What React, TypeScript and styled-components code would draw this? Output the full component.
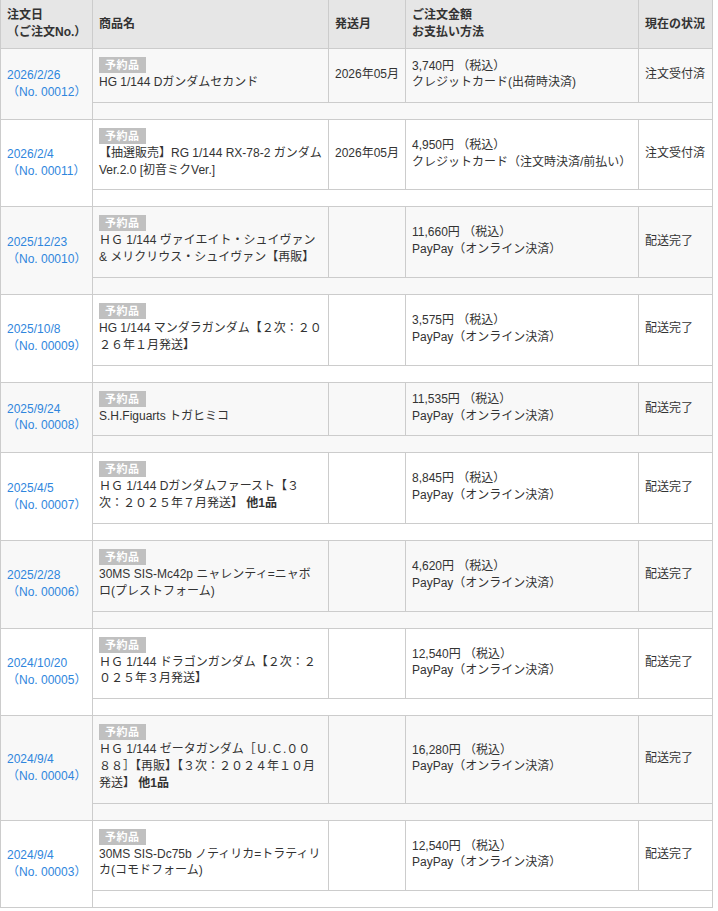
import { createGlobalStyle, styled } from "styled-components";

const GlobalStyle = createGlobalStyle`
  html, body {
    margin: 0;
    padding: 0;
    background: #ffffff;
  }
  body {
    font-family: "Liberation Sans", Arial, "Noto Sans CJK JP", sans-serif;
    font-size: 12px;
    color: #333333;
  }
`;

const Table = styled.table`
  width: 712px;
  border-collapse: collapse;
  table-layout: fixed;
  line-height: 1.4;
`;

const HeadCell = styled.th`
  background: #e6e6e6;
  border: 1px solid #cccccc;
  border-top: none;
  color: #333333;
  font-weight: bold;
  text-align: left;
  vertical-align: middle;
  padding: 6px 6px;
  height: 36px;
  white-space: nowrap;
`;

const Row = styled.tr<{ $alt: boolean }>`
  background: ${(p) => (p.$alt ? "#f8f8f8" : "#ffffff")};
`;

const Cell = styled.td<{ $nowrap?: boolean }>`
  border: 1px solid #cccccc;
  vertical-align: middle;
  padding: 8px 6px 10px;
  white-space: ${(p) => (p.$nowrap ? "nowrap" : "normal")};
`;

const DateCell = styled(Cell)`
  padding: 6px 6px;
  white-space: nowrap;
`;

const ProductCell = styled(Cell)`
  padding: 8px 6px 11px;
`;

const SpacerCell = styled.td`
  border: 1px solid #cccccc;
  height: 16px;
  padding: 0;
`;

const DateLink = styled.a`
  color: #2f86dd;
  text-decoration: none;
  display: block;
`;

const Badge = styled.span`
  display: inline-block;
  background: #c0c0c0;
  color: #ffffff;
  font-size: 11px;
  font-weight: bold;
  line-height: 16px;
  height: 16px;
  padding: 0 6px;
  margin-bottom: 1px;
  letter-spacing: 0.5px;
`;

const ProductName = styled.div`
  word-break: break-all;
`;

const Extra = styled.b`
  font-weight: bold;
`;

type Order = {
  date: string;
  no: string;
  name: string;
  extra?: string;
  ship: string;
  price: string;
  pay: string;
  status: string;
};

const orders: Order[] = [
  { date: "2026/2/26", no: "00012", name: "HG 1/144 Dガンダムセカンド", ship: "2026年05月", price: "3,740円", pay: "クレジットカード(出荷時決済)", status: "注文受付済" },
  { date: "2026/2/4", no: "00011", name: "【抽選販売】RG 1/144 RX-78-2 ガンダム Ver.2.0 [初音ミクVer.]", ship: "2026年05月", price: "4,950円", pay: "クレジットカード（注文時決済/前払い）", status: "注文受付済" },
  { date: "2025/12/23", no: "00010", name: "ＨＧ 1/144 ヴァイエイト・シュイヴァン & メリクリウス・シュイヴァン【再販】", ship: "", price: "11,660円", pay: "PayPay（オンライン決済）", status: "配送完了" },
  { date: "2025/10/8", no: "00009", name: "HG 1/144 マンダラガンダム【２次：２０２６年１月発送】", ship: "", price: "3,575円", pay: "PayPay（オンライン決済）", status: "配送完了" },
  { date: "2025/9/24", no: "00008", name: "S.H.Figuarts トガヒミコ", ship: "", price: "11,535円", pay: "PayPay（オンライン決済）", status: "配送完了" },
  { date: "2025/4/5", no: "00007", name: "ＨＧ 1/144 Dガンダムファースト【３次：２０２５年７月発送】", extra: "他1品", ship: "", price: "8,845円", pay: "PayPay（オンライン決済）", status: "配送完了" },
  { date: "2025/2/28", no: "00006", name: "30MS SIS-Mc42p ニャレンティ=ニャボロ(プレストフォーム)", ship: "", price: "4,620円", pay: "PayPay（オンライン決済）", status: "配送完了" },
  { date: "2024/10/20", no: "00005", name: "ＨＧ 1/144 ドラゴンガンダム【２次：２０２５年３月発送】", ship: "", price: "12,540円", pay: "PayPay（オンライン決済）", status: "配送完了" },
  { date: "2024/9/4", no: "00004", name: "ＨＧ 1/144 ゼータガンダム［Ｕ.Ｃ.００８８］【再販】【３次：２０２４年１０月発送】", extra: "他1品", ship: "", price: "16,280円", pay: "PayPay（オンライン決済）", status: "配送完了" },
  { date: "2024/9/4", no: "00003", name: "30MS SIS-Dc75b ノティリカ=トラティリカ(コモドフォーム)", ship: "", price: "12,540円", pay: "PayPay（オンライン決済）", status: "配送完了" },
];

export default function App() {
  return (
    <>
      <GlobalStyle />
      <Table>
        <colgroup>
          <col style={{ width: 92 }} />
          <col style={{ width: 236 }} />
          <col style={{ width: 77 }} />
          <col style={{ width: 233 }} />
          <col style={{ width: 74 }} />
        </colgroup>
        <thead>
          <tr>
            <HeadCell>
              注文日
              <br />
              （ご注文No.）
            </HeadCell>
            <HeadCell>商品名</HeadCell>
            <HeadCell>発送月</HeadCell>
            <HeadCell>
              ご注文金額
              <br />
              お支払い方法
            </HeadCell>
            <HeadCell>現在の状況</HeadCell>
          </tr>
        </thead>
        <tbody>
          {orders.map((o, i) => {
            const alt = i % 2 === 0;
            return [
              <Row key={o.no + "a"} $alt={alt}>
                <DateCell rowSpan={2}>
                  <DateLink href="#">{o.date}</DateLink>
                  <DateLink href="#">（No. {o.no}）</DateLink>
                </DateCell>
                <ProductCell>
                  <Badge>予約品</Badge>
                  <ProductName>
                    {o.name}
                    {o.extra && (
                      <>
                        {" "}
                        <Extra>{o.extra}</Extra>
                      </>
                    )}
                  </ProductName>
                </ProductCell>
                <Cell $nowrap>{o.ship}</Cell>
                <Cell $nowrap>
                  {o.price} （税込）
                  <br />
                  {o.pay}
                </Cell>
                <Cell $nowrap>{o.status}</Cell>
              </Row>,
              <Row key={o.no + "b"} $alt={alt}>
                <SpacerCell colSpan={4} />
              </Row>,
            ];
          })}
        </tbody>
      </Table>
    </>
  );
}
